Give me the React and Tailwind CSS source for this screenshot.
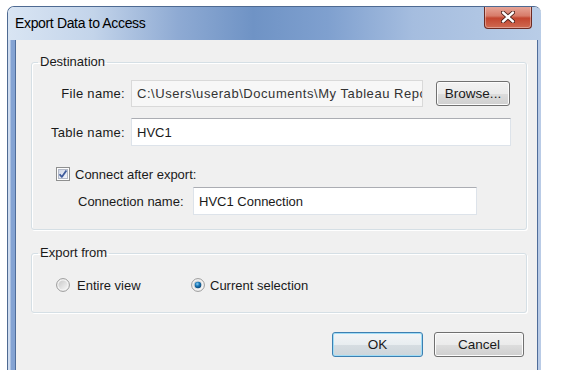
import React from "react";

function CheckBox() {
  return (
    <svg width="14" height="14" viewBox="0 0 14 14" className="shrink-0">
      <defs>
        <linearGradient id="cbg" x1="0" y1="0" x2="1" y2="1">
          <stop offset="0" stopColor="#cfd6e6" />
          <stop offset="1" stopColor="#f4f6fb" />
        </linearGradient>
      </defs>
      <rect x="0.5" y="0.5" width="13" height="13" fill="#fdfdfd" stroke="#8e8f8f" />
      <rect x="2.5" y="2.5" width="9" height="9" fill="url(#cbg)" stroke="#b3b9c8" />
      <path d="M3.6 7.2 L5.8 9.9 L10.4 3.4" fill="none" stroke="#3d5a9c" strokeWidth="1.8" strokeLinejoin="round" />
    </svg>
  );
}

function Radio({ checked }) {
  return (
    <svg width="14" height="14" viewBox="0 0 14 14" className="shrink-0">
      <defs>
        <linearGradient id="rbg" x1="0" y1="0" x2="1" y2="1">
          <stop offset="0" stopColor="#c9c9c9" />
          <stop offset="1" stopColor="#f7f7f7" />
        </linearGradient>
        <radialGradient id="rdot" cx="0.4" cy="0.35" r="0.7">
          <stop offset="0" stopColor="#8fd0f5" />
          <stop offset="0.45" stopColor="#1a79b8" />
          <stop offset="1" stopColor="#0b3f6e" />
        </radialGradient>
      </defs>
      <circle cx="7" cy="7" r="6.4" fill="#f4f4f4" stroke="#8e8f8f" strokeWidth="0.9" />
      <circle cx="7" cy="7" r="4.6" fill="url(#rbg)" />
      {checked && <circle cx="7" cy="7" r="3.3" fill="url(#rdot)" />}
    </svg>
  );
}

function Btn({ children, def, w }) {
  return (
    <div
      className={
        "flex h-[25px] items-center justify-center rounded-[3px] border text-[13.5px] " +
        (def
          ? "border-[#3c7fb1] shadow-[inset_0_0_0_1px_#9fdcf6] bg-[linear-gradient(#f2f5f7_0%,#e8edf0_50%,#d6dde2_51%,#cdd5da_100%)]"
          : "border-[#707070] shadow-[inset_0_0_0_1px_#fcfcfc] bg-[linear-gradient(#f2f2f2_0%,#ebebeb_50%,#dddddd_51%,#cfcfcf_100%)]")
      }
      style={{ width: w }}
    >
      {children}
    </div>
  );
}

export default function App() {
  return (
    <div className="h-[382px] w-[561px] bg-white pt-[6px] text-[13px] leading-[15px] text-[#1a1a1a] [font-family:'Liberation_Sans',Arial,sans-serif]">
      <div className="ml-[7px] flex w-[534px] flex-col overflow-hidden rounded-t-[7px] border-l border-t border-[#4e6a92]">
        {/* title bar */}
        <div className="relative flex h-[33px] items-center bg-[linear-gradient(90deg,#d9e5f3_0%,#c3d4ea_16%,#8eaad3_32%,#6f93c5_46%,#7fa0cf_60%,#a5bddf_76%,#b9cde7_100%)] pl-[7px]">
          <span className="text-[14px] tracking-[-0.35px] text-black">Export Data to Access</span>
          <div className="absolute right-[9px] top-[-1px] flex h-[23px] w-[48px] items-center justify-center rounded-b-[4px] border border-t-0 border-[#6d2a22] bg-[linear-gradient(#e9a99c_0%,#d77b69_45%,#c3452f_55%,#cf6a52_100%)] shadow-[inset_0_0_0_1px_rgba(255,255,255,0.35)]">
            <svg width="14" height="12" viewBox="0 0 14 12">
              <path d="M2 1.5 L12 10.5 M12 1.5 L2 10.5" stroke="#4a1f1a" strokeWidth="4.2" strokeLinecap="round" />
              <path d="M2 1.5 L12 10.5 M12 1.5 L2 10.5" stroke="#ffffff" strokeWidth="2.4" strokeLinecap="round" />
            </svg>
          </div>
        </div>
        {/* body with frame */}
        <div className="flex bg-[linear-gradient(90deg,#cfdcef_0px,#cfdcef_2px,#84a3d3_3px,#7b9bcf_100%)] pl-[7px]">
          <div className="flex h-[330px] w-[524px] flex-col border-l border-r border-[#4f6d9a] bg-[#f0f0f0] pl-[15px] pr-[10px] pt-[14px]">
            {/* Destination */}
            <fieldset className="rounded-[3px] border border-[#d5dfe5] pb-[14px] shadow-[inset_1px_1px_0_#ffffff,1px_1px_0_#ffffff]">
              <legend className="ml-[6px] px-[2px] leading-[16px]">Destination</legend>
              <div className="mt-[10px] flex h-[27px] items-center">
                <div className="w-[93px] text-right tracking-[0.3px]">File name:</div>
                <div className="ml-[6px] flex h-[27px] w-[292px] items-center overflow-hidden whitespace-nowrap border border-[#d9d9d9] bg-[#f7f7f7] pl-[5px] tracking-[0.55px] text-[#333]">
                  C:\Users\userab\Documents\My Tableau Repository
                </div>
                <div className="ml-[13px]">
                  <Btn w="74px">Browse...</Btn>
                </div>
              </div>
              <div className="mt-[11px] flex h-[28px] items-center">
                <div className="w-[93px] text-right tracking-[0.3px]">Table name:</div>
                <div className="ml-[6px] flex h-[28px] w-[380px] items-center border border-[#dde3ea] border-t-[#abadb3] bg-white pl-[5px]">
                  HVC1
                </div>
              </div>
              <div className="ml-[24px] mt-[20px] flex h-[16px] items-center gap-[5px]">
                <CheckBox />
                <span>Connect after export:</span>
              </div>
              <div className="ml-[46px] mt-[5px] flex h-[28px] items-center">
                <div className="w-[115px]">Connection name:</div>
                <div className="flex h-[28px] w-[284px] items-center border border-[#dde3ea] border-t-[#abadb3] bg-white pl-[5px]">
                  HVC1 Connection
                </div>
              </div>
            </fieldset>
            {/* Export from */}
            <fieldset className="mt-[15px] rounded-[3px] border border-[#d5dfe5] pb-[19px] shadow-[inset_1px_1px_0_#ffffff,1px_1px_0_#ffffff]">
              <legend className="ml-[6px] px-[2px] leading-[16px]">Export from</legend>
              <div className="ml-[24px] mt-[16px] flex h-[16px] items-center">
                <div className="flex w-[135px] items-center gap-[7px]">
                  <Radio />
                  <span>Entire view</span>
                </div>
                <div className="flex items-center gap-[5px]">
                  <Radio checked />
                  <span>Current selection</span>
                </div>
              </div>
            </fieldset>
            {/* buttons */}
            <div className="mr-[3px] mt-[19px] flex justify-end gap-[11px]">
              <Btn def w="91px">OK</Btn>
              <Btn w="90px">Cancel</Btn>
            </div>
          </div>
          <div className="w-[3px] bg-[#b9cbe6]" />
        </div>
      </div>
    </div>
  );
}
